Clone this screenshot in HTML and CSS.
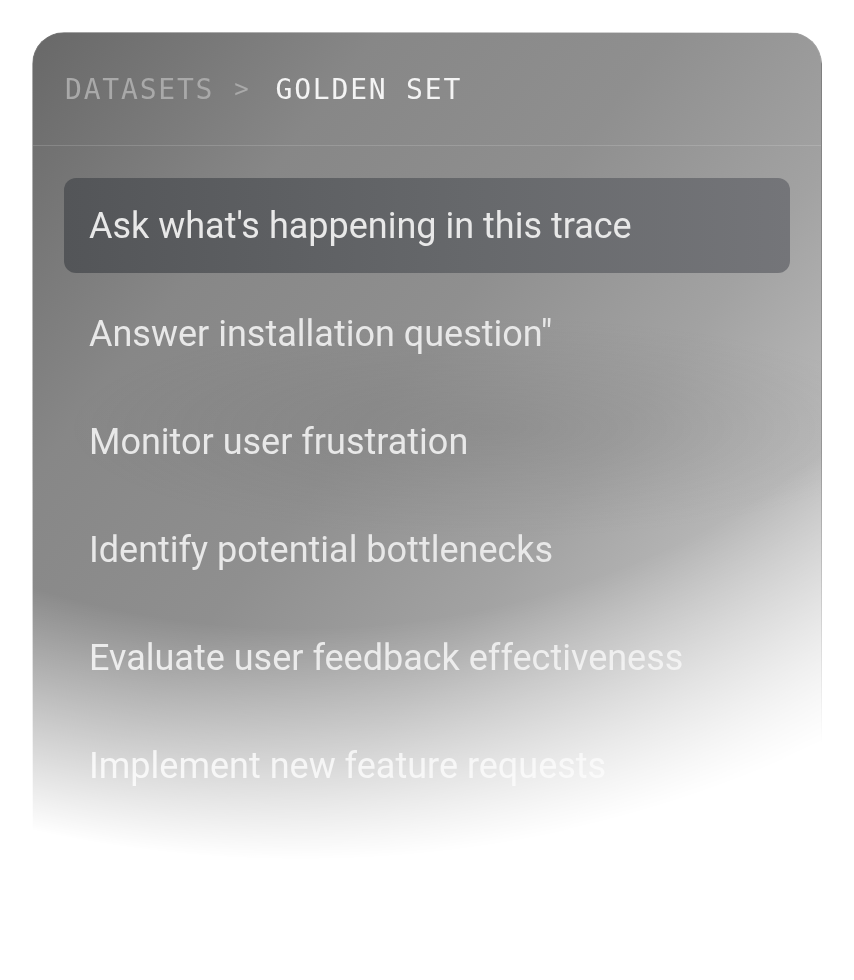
FILE: index.html
```html
<!DOCTYPE html>
<html lang="en">
<head>
    <meta charset="UTF-8">
    <meta name="viewport" content="width=device-width, initial-scale=1.0">
    <title>Golden Set</title>
    <link rel="stylesheet" href="styles.css">
</head>
<body>
    <div class="card">
        <div class="crumbs">
            <span class="crumb">DATASETS</span>
            <span class="sep">&gt;</span>
            <span class="crumb current">GOLDEN SET</span>
        </div>

        <ul class="items">
            <li class="item active">Ask what's happening in this trace</li>
            <li class="item">Answer installation question"</li>
            <li class="item">Monitor user frustration</li>
            <li class="item">Identify potential bottlenecks</li>
            <li class="item">Evaluate user feedback effectiveness</li>
            <li class="item">Implement new feature requests</li>
        </ul>
    </div>
</body>
</html>
```

FILE: styles.css
```css
:root {
    --text-light: #e8e8e8;
    --crumb-dim: #a9a9a9;
}

body {
    margin: 0;
    padding: 0;
    background-color: #ffffff;
    font-family: Roboto, "Noto Sans", sans-serif;
}

.card {
    width: 788px;
    height: 840px;
    margin: 32px 0 0 32px;
    border: 1px solid rgba(255, 255, 255, 0.14);
    border-radius: 32px;
    overflow: hidden;
    background:
        radial-gradient(ellipse 420px 110px at 58% 47%, rgba(100, 100, 100, 0.2), transparent 100%),
        linear-gradient(128deg, #686868 0%, #878787 24%, #8f8f8f 44%, #a2a2a2 62%, #c6c6c6 84%, #e6e6e6 100%);
    -webkit-mask-image: radial-gradient(1020px 828px at 34% 0, #000 72%, transparent 100%);
    mask-image: radial-gradient(1020px 828px at 34% 0, #000 72%, transparent 100%);
}

.crumbs {
    height: 112px;
    padding: 0 32px;
    display: flex;
    align-items: center;
    gap: 20px;
    border-bottom: 1px solid rgba(255, 255, 255, 0.15);
    font-family: "DejaVu Sans Mono", "Liberation Mono", monospace;
    font-size: 28px;
    letter-spacing: 1.8px;
    color: var(--crumb-dim);
}

.sep {
    font-size: 24px;
    margin-right: 5px;
}

.current {
    color: #f4f4f4;
}

.items {
    list-style: none;
    margin: 0;
    padding: 32px 31px;
    display: flex;
    flex-direction: column;
    gap: 13px;
}

.item {
    height: 95px;
    padding: 0 25px;
    display: flex;
    align-items: center;
    font-size: 36px;
    color: var(--text-light);
    border-radius: 12px;
}

.item.active {
    background: linear-gradient(90deg, #535558 0%, #66686b 55%, #747579 100%);
}
```
